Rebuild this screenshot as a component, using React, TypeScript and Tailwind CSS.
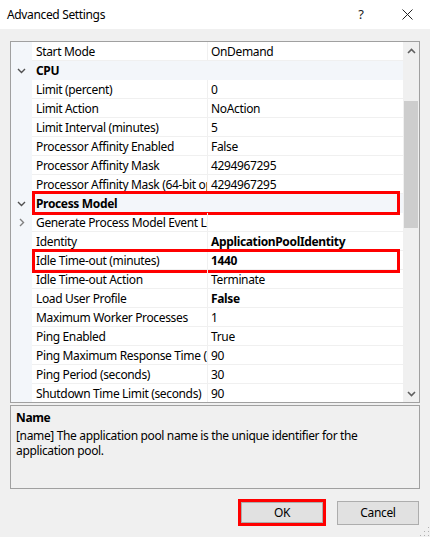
import React from "react";

type Row =
  | { kind: "cat"; name: string; red?: boolean }
  | { kind: "prop"; name: string; value: string; bold?: boolean; expand?: boolean; red?: boolean };

const rows: Row[] = [
  { kind: "prop", name: "Start Mode", value: "OnDemand" },
  { kind: "cat", name: "CPU" },
  { kind: "prop", name: "Limit (percent)", value: "0" },
  { kind: "prop", name: "Limit Action", value: "NoAction" },
  { kind: "prop", name: "Limit Interval (minutes)", value: "5" },
  { kind: "prop", name: "Processor Affinity Enabled", value: "False" },
  { kind: "prop", name: "Processor Affinity Mask", value: "4294967295" },
  { kind: "prop", name: "Processor Affinity Mask (64-bit option)", value: "4294967295" },
  { kind: "cat", name: "Process Model", red: true },
  { kind: "prop", name: "Generate Process Model Event Log Entry", value: "", expand: true },
  { kind: "prop", name: "Identity", value: "ApplicationPoolIdentity", bold: true },
  { kind: "prop", name: "Idle Time-out (minutes)", value: "1440", bold: true, red: true },
  { kind: "prop", name: "Idle Time-out Action", value: "Terminate" },
  { kind: "prop", name: "Load User Profile", value: "False", bold: true },
  { kind: "prop", name: "Maximum Worker Processes", value: "1" },
  { kind: "prop", name: "Ping Enabled", value: "True" },
  { kind: "prop", name: "Ping Maximum Response Time (seconds)", value: "90" },
  { kind: "prop", name: "Ping Period (seconds)", value: "30" },
  { kind: "prop", name: "Shutdown Time Limit (seconds)", value: "90" },
];

const font = { fontFamily: '"Noto Sans", "Open Sans", sans-serif' };

function ChevronDown({ color = "#606060" }: { color?: string }) {
  return (
    <svg width="9" height="6" viewBox="0 0 9 6">
      <path d="M1 1 L4.5 4.5 L8 1" fill="none" stroke={color} strokeWidth="1.4" />
    </svg>
  );
}
function ChevronRight() {
  return (
    <svg width="6" height="9" viewBox="0 0 6 9">
      <path d="M1 1 L4.5 4.5 L1 8" fill="none" stroke="#808080" strokeWidth="1.4" />
    </svg>
  );
}

export default function App() {
  return (
    <div
      className="w-[430px] h-[537px] bg-[#f0f0f0] flex flex-col text-[12px] tracking-[-0.35px] text-black overflow-hidden relative"
      style={font}
    >
      {/* Title bar */}
      <div className="h-[29px] bg-white flex items-center shrink-0">
        <span className="pl-[7px] flex-1 text-[12px]">Advanced Settings</span>
        <span className="w-[46px] text-center text-[13px] text-[#222]">?</span>
        <span className="w-[46px] flex items-center justify-center">
          <svg width="11" height="11" viewBox="0 0 11 11">
            <path d="M0.5 0.5 L10.5 10.5 M10.5 0.5 L0.5 10.5" stroke="#222" strokeWidth="1" />
          </svg>
        </span>
      </div>

      <div className="px-[10px] pt-[12px] flex flex-col">
        {/* Property grid */}
        <div className="h-[362px] border border-[#a0a0a0] bg-white flex">
          <div className="flex-1 flex flex-col overflow-hidden">
            {rows.map((r, i) => {
              if (r.kind === "cat") {
                return (
                  <div key={i} className="h-[19px] shrink-0 flex bg-[#f3f6fa] relative">
                    <div className="w-[21px] flex items-center justify-center">
                      <ChevronDown color="#505050" />
                    </div>
                    <div className="flex-1 flex items-center pl-[4px] pt-px font-bold">{r.name}</div>
                    {r.red && (
                      <div className="absolute left-[21px] right-[3px] top-[-3px] bottom-[-2px] border-[3px] border-[#ff0000]" />
                    )}
                  </div>
                );
              }
              return (
                <div key={i} className="h-[19px] shrink-0 flex relative">
                  <div className="w-[21px] bg-[#f3f6fa] flex items-center justify-center">
                    {r.expand && <ChevronRight />}
                  </div>
                  <div className="w-[175px] flex items-center pl-[4px] pt-px whitespace-nowrap overflow-hidden border-b border-[#f0f0f0]">
                    {r.name}
                  </div>
                  <div className="w-px bg-[#f0f0f0]" />
                  <div
                    className={`flex-1 flex items-center pl-[3px] pt-px whitespace-nowrap overflow-hidden border-b border-[#f0f0f0] ${
                      r.bold ? "font-bold" : ""
                    }`}
                  >
                    {r.value}
                  </div>
                  {r.red && (
                    <div className="absolute left-[21px] right-[3px] top-[-2px] bottom-[-3px] border-[3px] border-[#ff0000]" />
                  )}
                </div>
              );
            })}
          </div>
          {/* Scrollbar */}
          <div className="w-[16px] bg-[#f0f0f0] flex flex-col shrink-0">
            <div className="h-[17px] flex items-center justify-center">
              <svg width="9" height="6" viewBox="0 0 9 6">
                <path d="M1 5 L4.5 1.5 L8 5" fill="none" stroke="#606060" strokeWidth="1.6" />
              </svg>
            </div>
            <div className="h-[42px]" />
            <div className="h-[127px] bg-[#cdcdcd] mx-px" />
            <div className="flex-1" />
            <div className="h-[17px] flex items-center justify-center">
              <svg width="9" height="6" viewBox="0 0 9 6">
                <path d="M1 1 L4.5 4.5 L8 1" fill="none" stroke="#606060" strokeWidth="1.6" />
              </svg>
            </div>
          </div>
        </div>

        {/* Description */}
        <div className="mt-[2px] h-[84px] border border-[#a0a0a0] px-[5px] pt-[3px] leading-[15px]">
          <div className="font-bold leading-[18px]">Name</div>
          <div className="mt-[1px]">
            [name] The application pool name is the unique identifier for the
            <br />
            application pool.
          </div>
        </div>

        {/* Buttons */}
        <div className="flex justify-end items-center mt-[10px] pr-[1px] gap-[11px]">
          <div className="border-[3px] border-[#ff0000] p-0">
            <div className="w-[82px] h-[21px] bg-[#e1e1e1] border border-[#adadad] flex items-center justify-center">
              OK
            </div>
          </div>
          <div className="w-[82px] h-[24px] bg-[#e1e1e1] border border-[#adadad] flex items-center justify-center">
            Cancel
          </div>
        </div>
      </div>

      {/* Resize grip */}
      <svg className="absolute right-0 bottom-0" width="12" height="12" viewBox="0 0 12 12">
        {[
          [10, 2], [10, 6], [6, 6], [10, 10], [6, 10], [2, 10],
        ].map(([x, y], i) => (
          <rect key={i} x={x} y={y} width="1" height="1" fill="#b0b0b0" />
        ))}
      </svg>
    </div>
  );
}
